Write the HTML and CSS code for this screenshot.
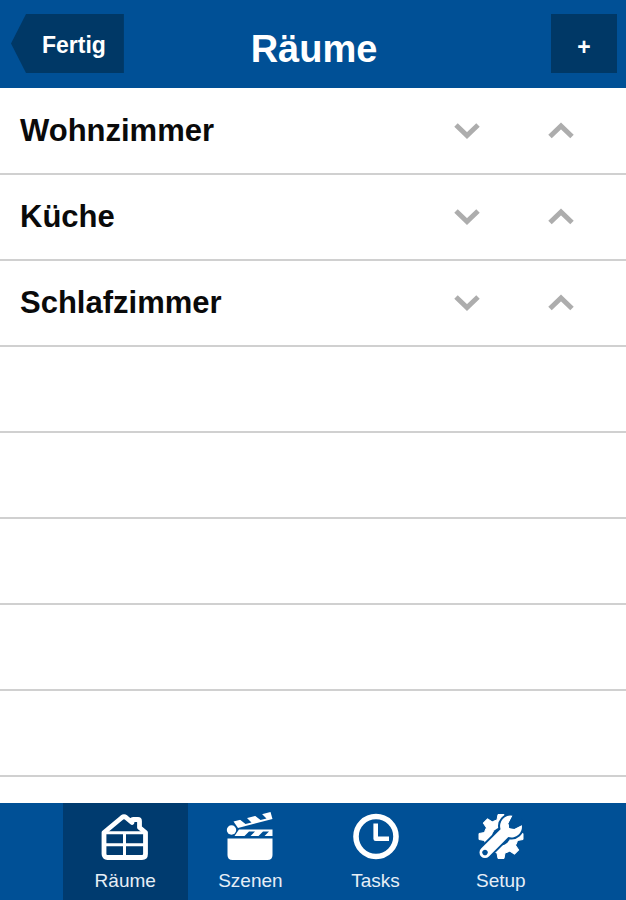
FILE: index.html
```html
<!DOCTYPE html>
<html lang="de">
<head>
    <meta charset="utf-8">
    <meta name="viewport" content="width=device-width, initial-scale=1">
    <title>Räume</title>
    <link rel="stylesheet" href="styles.css">
</head>
<body>
    <header class="header">
        <button class="btn back">Fertig</button>
        <h1 class="title">Räume</h1>
        <button class="btn add" aria-label="Raum hinzufügen">+</button>
    </header>

    <main class="content">
        <ul class="rooms">
            <li class="room">
                <span class="name">Wohnzimmer</span>
                <button class="move" aria-label="Nach unten"><svg width="26" height="18" viewBox="0 0 26 18"><path d="M2 3l11 10.500L24 3"/></svg></button>
                <button class="move" aria-label="Nach oben"><svg width="26" height="18" viewBox="0 0 26 18"><path d="M2 14.500L13 4l11 10.500"/></svg></button>
            </li>
            <li class="room">
                <span class="name">Küche</span>
                <button class="move" aria-label="Nach unten"><svg width="26" height="18" viewBox="0 0 26 18"><path d="M2 3l11 10.500L24 3"/></svg></button>
                <button class="move" aria-label="Nach oben"><svg width="26" height="18" viewBox="0 0 26 18"><path d="M2 14.500L13 4l11 10.500"/></svg></button>
            </li>
            <li class="room">
                <span class="name">Schlafzimmer</span>
                <button class="move" aria-label="Nach unten"><svg width="26" height="18" viewBox="0 0 26 18"><path d="M2 3l11 10.500L24 3"/></svg></button>
                <button class="move" aria-label="Nach oben"><svg width="26" height="18" viewBox="0 0 26 18"><path d="M2 14.500L13 4l11 10.500"/></svg></button>
            </li>
            <li class="room"></li>
            <li class="room"></li>
            <li class="room"></li>
            <li class="room"></li>
            <li class="room"></li>
        </ul>
    </main>

    <nav class="tabs">
        <a href="#raeume" class="tab active">
            <svg class="icon" viewBox="0 0 48 48" fill="none" stroke="#fff" stroke-linejoin="round">
                <path stroke-width="4.800" d="M3 19.500L21 4.500q2-1.500 4 0L31 9.500V8q0-1.500 1.500-1.500h4.500q1.500 0 1.500 1.500v6.500l6 5V41q0 3.500-3.500 3.500H6.500Q3 44.500 3 41z"/>
                <path stroke-width="3" d="M3 19.800h41.500M3 31.700h41.500M23.500 19.800v24"/>
            </svg>
            <span>Räume</span>
        </a>
        <a href="#szenen" class="tab">
            <svg class="icon" viewBox="0 0 48 48" fill="#fff">
                <path d="M1.500 25.500h45V42q0 5-5 5h-35q-5 0-5-5z"/>
                <circle cx="5.500" cy="17" r="4.700"/>
                <path d="M13 16.500h33.500v6.500H8.500z"/>
                <path d="M7.500 8.500L44.500-1 46.500 6 12 15z"/>
                <path class="gap" d="M18 23.500l5-5h6l-5 5zM32 23.500l5-5h6l-5 5zM12.500 5.500l7-2 6 6-6 1.600zM27.500 1.500l7-2 6 6-6 1.600z"/>
            </svg>
            <span>Szenen</span>
        </a>
        <a href="#tasks" class="tab">
            <svg class="icon" viewBox="0 0 48 48" fill="none" stroke="#fff">
                <circle cx="24" cy="23.500" r="20" stroke-width="5.600"/>
                <path stroke-width="4.600" stroke-linejoin="round" d="M23.700 10.500v15.200H37"/>
            </svg>
            <span>Tasks</span>
        </a>
        <a href="#setup" class="tab">
            <svg class="icon" viewBox="0 0 48 48">
                <g fill="#fff" stroke="#fff" stroke-linejoin="round">
                    <circle cx="24" cy="23.500" r="17"/>
                    <path d="M20 7l1-5.500h6l1 5.500zM20 40l1 5.500h6l1-5.500z"/>
                    <path d="M20 7l1-5.500h6l1 5.500zM20 40l1 5.500h6l1-5.500z" transform="rotate(45 24 23.500)"/>
                    <path d="M20 7l1-5.500h6l1 5.500zM20 40l1 5.500h6l1-5.500z" transform="rotate(90 24 23.500)"/>
                    <path d="M20 7l1-5.500h6l1 5.500zM20 40l1 5.500h6l1-5.500z" transform="rotate(135 24 23.500)"/>
                </g>
                <circle class="gap" cx="24" cy="23.500" r="9"/>
                <g transform="rotate(45 8 39.500)">
                    <path class="wrench" d="M2.500 39.500V12A10.500 10.500 0 0 1 1.500-6L4 2l4 3 4-3 2.500-8A10.500 10.500 0 0 1 13.500 12v27.500a5.500 5.500 0 0 1-11 0z"/>
                    <path class="gap" d="M1.500-6L4 2l4 3 4-3 2.500-8-2-4h-9z"/>
                    <circle class="gap" cx="8" cy="39.500" r="2.700"/>
                </g>
            </svg>
            <span>Setup</span>
        </a>
    </nav>
</body>
</html>
```

FILE: styles.css
```css
* {
    box-sizing: border-box;
}
body {
    display: flex;
    flex-direction: column;
    height: 100vh;
    margin: 0;
    background-color: #fff;
    font-family: "Liberation Sans", Arial, sans-serif;
}
button {
    border: 0;
    padding: 0;
    font-family: inherit;
    cursor: pointer;
}
.header {
    display: grid;
    grid-template-columns: 1fr auto 1fr;
    align-items: start;
    height: 88px;
    padding: 14px 9px 0 11px;
    background-color: #005096;
    color: white;
}
.title {
    margin: 0;
    font-size: 38px;
    line-height: 70px;
}
.btn {
    height: 59px;
    background-color: #003866;
    color: white;
    font-size: 23px;
    font-weight: bold;
}
.back {
    justify-self: start;
    padding: 4px 18px 0 31px;
    clip-path: polygon(15px 0, 100% 0, 100% 100%, 15px 100%, 0 50%);
}
.add {
    justify-self: end;
    width: 66px;
    padding-top: 8px;
}
.content {
    flex: 1;
    min-height: 0;
    padding-top: 1px;
    overflow: hidden;
}
.rooms {
    margin: 0;
    padding: 0;
    list-style: none;
}
.room {
    display: flex;
    align-items: center;
    height: 86px;
    padding: 0 18px 0 20px;
    border-bottom: 2px solid #d0d0d0;
}
.name {
    flex: 1;
    color: #0a0a0a;
    font-size: 31px;
    font-weight: bold;
}
.move {
    display: flex;
    align-items: center;
    justify-content: center;
    width: 94px;
    height: 60px;
    background: none;
}
.move path {
    fill: none;
    stroke: #adadad;
    stroke-width: 5;
}
.tabs {
    display: flex;
    justify-content: center;
    height: 97px;
    background-color: #005096;
}
.tab {
    display: flex;
    flex: 0 0 20%;
    flex-direction: column;
    align-items: center;
    gap: 9px;
    padding-top: 10px;
    color: #e6eef6;
    font-size: 19px;
    line-height: 22px;
    text-decoration: none;
}
.active {
    background-color: #003b6f;
}
.icon {
    width: 48px;
    height: 48px;
    overflow: visible;
}
.gap {
    fill: #005096;
}
.wrench {
    fill: #fff;
    stroke: #005096;
    stroke-width: 4;
    paint-order: stroke;
}
```
